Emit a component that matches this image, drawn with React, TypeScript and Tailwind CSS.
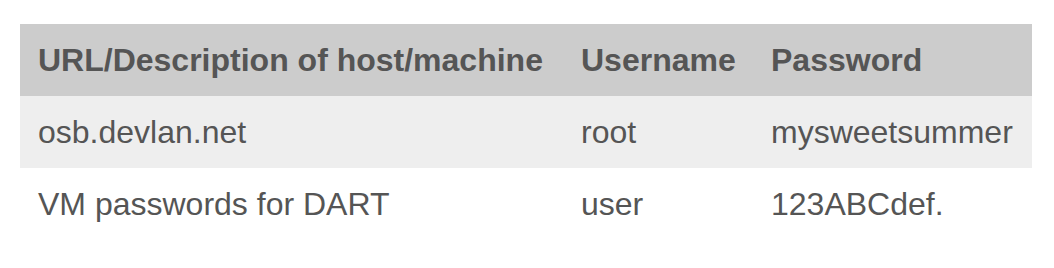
const rows = [
  { host: 'osb.devlan.net', user: 'root', pass: 'mysweetsummer' },
  { host: 'VM passwords for DART', user: 'user', pass: '123ABCdef.' },
];

export default function App() {
  return (
    <div className="h-[268px] bg-white pl-5 pt-6" style={{ fontFamily: '"Liberation Sans", Arial, sans-serif' }}>
      <table className="table-fixed border-collapse text-[32px] leading-[72px] text-[#555]">
        <colgroup>
          <col className="w-[543px]" />
          <col className="w-[190px]" />
          <col className="w-[279px]" />
        </colgroup>
        <thead>
          <tr className="bg-[#ccc] text-left font-bold">
            <th className="h-[72px] p-0 pl-[18px]">URL/Description of host/machine</th>
            <th className="h-[72px] p-0 pl-[18px]">Username</th>
            <th className="h-[72px] p-0 pl-[18px]">Password</th>
          </tr>
        </thead>
        <tbody>
          {rows.map((r, i) => (
            <tr key={r.host} className={i % 2 === 0 ? 'bg-[#eee]' : 'bg-white'}>
              <td className="h-[72px] p-0 pl-[18px]">{r.host}</td>
              <td className="h-[72px] p-0 pl-[18px]">{r.user}</td>
              <td className="h-[72px] p-0 pl-[18px]">{r.pass}</td>
            </tr>
          ))}
        </tbody>
      </table>
    </div>
  );
}
